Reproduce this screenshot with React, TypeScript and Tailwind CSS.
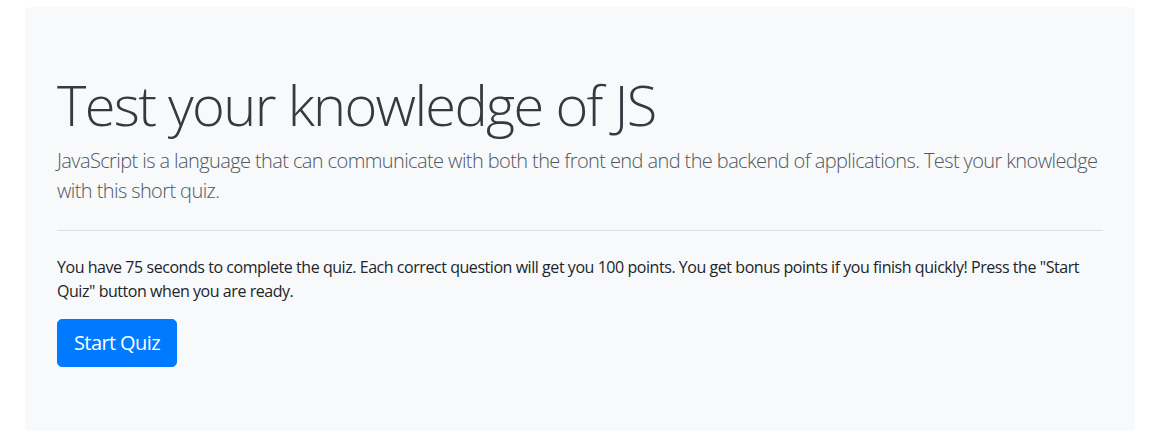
export default function App() {
  return (
    <div className="min-h-screen bg-white pt-[7px] pl-[25px] pr-[21px]" style={{ fontFamily: '"Open Sans", "Noto Sans", sans-serif' }}>
      <div className="bg-[#f8f9fa] rounded-[5px] px-8 py-16 text-[#212529]">
        <h1 className="text-[56px] font-light leading-[1.2] mb-2 text-[#343a40] tracking-[-0.03em]">Test your knowledge of JS</h1>
        <p className="text-[20px] font-light leading-[1.5] text-[#51575e] tracking-[-0.03em]">
          JavaScript is a language that can communicate with both the front end and the backend of applications. Test your knowledge with this short quiz.
        </p>
        <hr className="my-6 border-t border-[rgba(0,0,0,0.1)]" />
        <p className="text-base leading-6 mb-4 tracking-[-0.028em]">
          You have 75 seconds to complete the quiz. Each correct question will get you 100 points. You get bonus points if you finish quickly! Press the "Start Quiz" button when you are ready.
        </p>
        <button className="bg-[#007bff] border border-[#007bff] text-white text-[20px] leading-[1.5] px-4 py-2 rounded-[5px] tracking-[-0.03em]">Start Quiz</button>
      </div>
    </div>
  );
}
